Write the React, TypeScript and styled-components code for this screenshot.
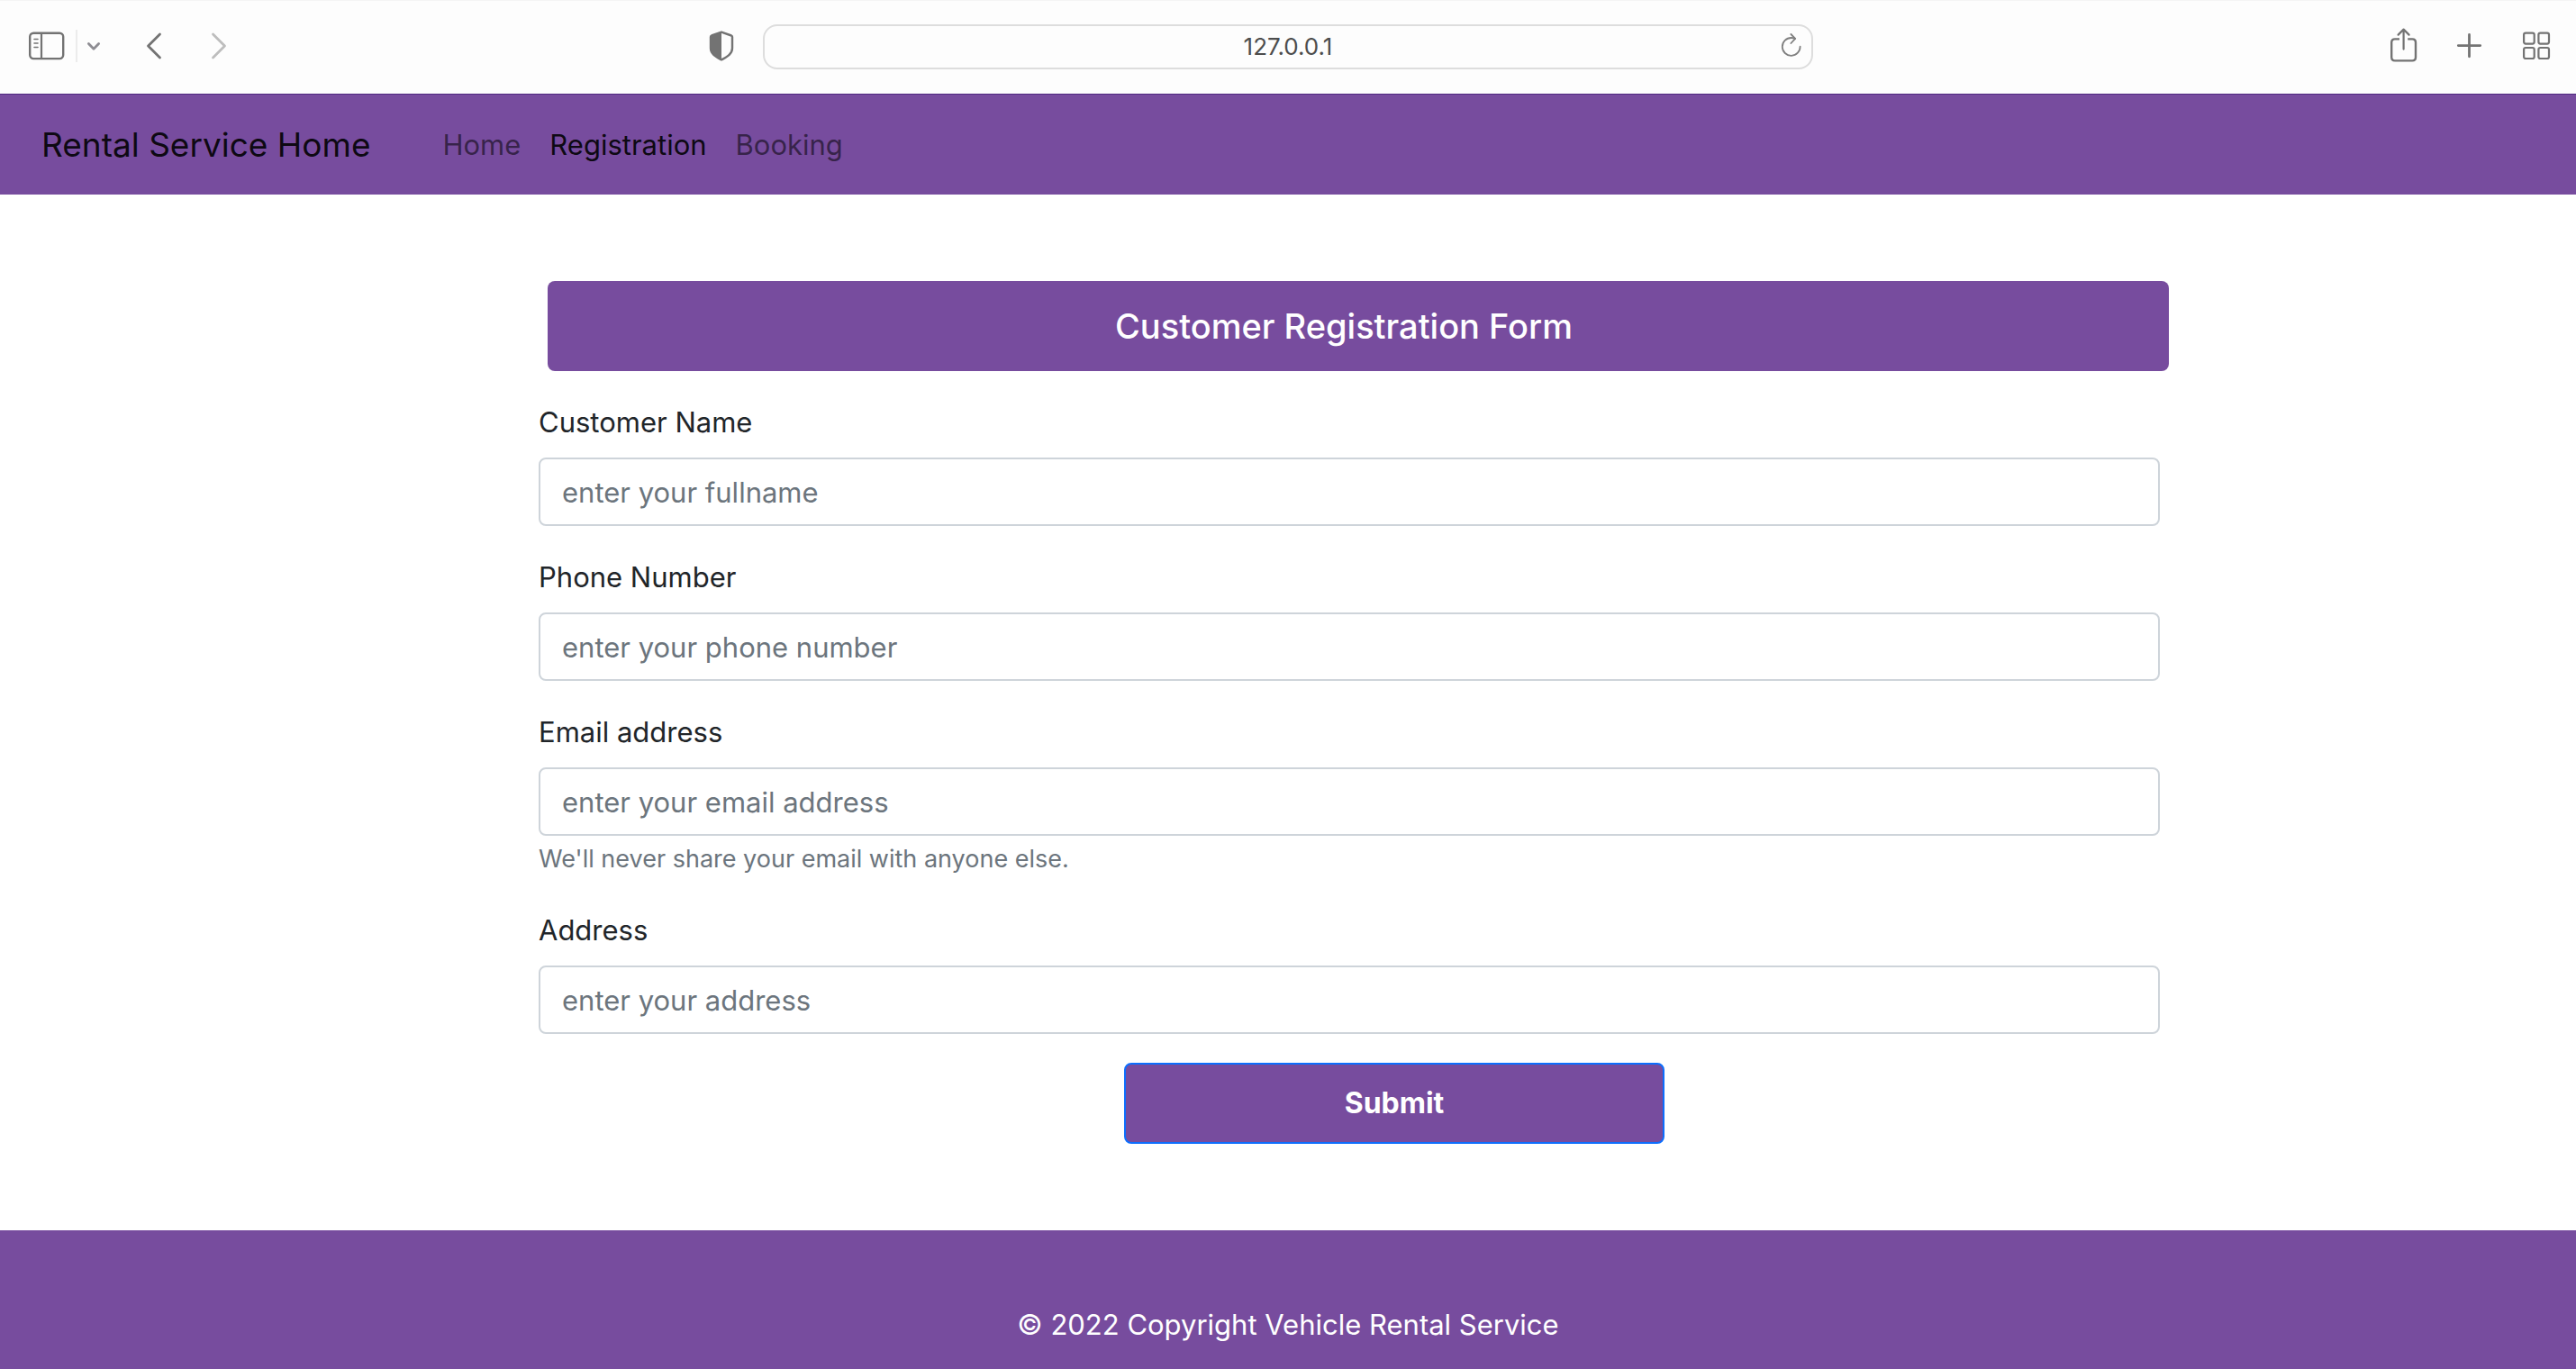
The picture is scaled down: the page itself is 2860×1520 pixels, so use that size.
import React from "react";
import styled, { createGlobalStyle } from "styled-components";

const purple = "#774c9e";

const GlobalStyle = createGlobalStyle`
  *, *::before, *::after { box-sizing: border-box; }
  body {
    margin: 0;
    background: #ffffff;
    color: #212529;
    font-family: Inter, "Liberation Sans", sans-serif;
    font-size: 31px;
    line-height: 50px;
  }
  button, input { font: inherit; }
`;

const Page = styled.div`
  display: flex;
  flex-direction: column;
  min-height: 100vh;
`;

const Toolbar = styled.div`
  display: grid;
  grid-template-columns: 1fr minmax(0, 1166px) 1fr;
  align-items: center;
  height: 105px;
  padding-bottom: 2px;
  border-top: 1px solid #f5f5f5;
  border-bottom: 1px solid #4f2780;
  background: #fdfdfd;
`;

const ToolGroup = styled.div<{ $end?: boolean }>`
  display: flex;
  align-items: center;
  justify-content: ${(p) => (p.$end ? "flex-end" : "flex-start")};
  gap: ${(p) => (p.$end ? "42px" : "0")};
  padding: ${(p) => (p.$end ? "0 28px 2px 0" : "0 32px 2px")};
`;

const ToolButton = styled.button<{ $space?: number; $push?: boolean }>`
  display: flex;
  flex: none;
  padding: 0;
  border: 0;
  background: none;
  color: #737373;
  margin-left: ${(p) => (p.$push ? "auto" : `${p.$space ?? 0}px`)};

  &:disabled { color: #bdbdbd; }
`;

const Divider = styled.span`
  width: 2px;
  height: 36px;
  margin: 0 0 0 12px;
  background: #ececec;
`;

const AddressBar = styled.div`
  position: relative;
  display: flex;
  height: 50px;
  border: 2px solid #dddddd;
  border-radius: 16px;
`;

const AddressInput = styled.input`
  width: 100%;
  padding: 0;
  border: 0;
  border-radius: 14px;
  outline: 0;
  background: transparent;
  color: #4d4d4d;
  font-size: 26px;
  line-height: 44px;
  text-align: center;
`;

const ReloadButton = styled.button`
  position: absolute;
  top: 7px;
  right: 10px;
  display: flex;
  padding: 0;
  border: 0;
  background: none;
  color: #808080;
`;

const Navbar = styled.nav`
  display: flex;
  align-items: center;
  gap: 80px;
  height: 111px;
  padding: 0 46px;
  background: ${purple};
`;

const Brand = styled.a`
  color: rgba(0, 0, 0, 0.9);
  font-size: 37px;
  text-decoration: none;
`;

const NavLinks = styled.div`
  display: flex;
  gap: 32px;
`;

const NavLink = styled.a<{ $active?: boolean }>`
  color: ${(p) => (p.$active ? "rgba(0, 0, 0, 0.9)" : "rgba(0, 0, 0, 0.55)")};
  text-decoration: none;
`;

const Main = styled.main`
  display: flex;
  justify-content: center;
  padding: 96px 0 96px 136px;
`;

const Form = styled.form`
  display: flex;
  flex-direction: column;
  gap: 32px;
  width: 100%;
  max-width: 1800px;
`;

const FormTitle = styled.h1`
  margin: 0 -10px 0 10px;
  padding: 25px 32px 25px 0;
  border-radius: 8px;
  background: ${purple};
  color: #ffffff;
  font-size: 38px;
  font-weight: 500;
  line-height: 50px;
  text-align: center;
`;

const Field = styled.div`
  display: flex;
  flex-direction: column;
`;

const Label = styled.label`
  margin-bottom: 14px;
`;

const TextInput = styled.input`
  width: 100%;
  height: 76px;
  padding: 0 24px;
  border: 2px solid #ced4da;
  border-radius: 8px;
  background: #ffffff;
  color: #212529;

  &::placeholder { color: #6c757d; opacity: 1; }
`;

const HelpText = styled.p`
  margin: 6px 0 2px;
  color: #6c757d;
  font-size: 27px;
  line-height: 40px;
`;

const Actions = styled.div`
  display: flex;
  justify-content: center;
  padding-left: 100px;
`;

const SubmitButton = styled.button`
  width: 600px;
  height: 90px;
  border: 2px solid #0d6efd;
  border-radius: 8px;
  background: ${purple};
  color: #ffffff;
  font-size: 32px;
  font-weight: 700;
`;

const Footer = styled.footer`
  flex: 1;
  padding: 80px 24px 24px;
  background: ${purple};
  color: #ffffff;
  text-align: center;
`;

const SidebarIcon = () => (
  <svg width="40" height="32" viewBox="0 0 40 32" fill="none" stroke="currentColor" strokeLinecap="round">
    <rect x="1.2" y="1.7" width="37" height="28.4" rx="4" strokeWidth="2.4" />
    <path d="M14 2V30" strokeWidth="2.2" />
    <path d="M6 8.5h4M6 13h4M6 17.5h4" strokeWidth="1.6" />
  </svg>
);

const ChevronDownIcon = () => (
  <svg width="16" height="12" viewBox="0 0 16 12" fill="none" stroke="#8e8d93" strokeWidth="2.8" strokeLinecap="round" strokeLinejoin="round">
    <path d="M2.4 3.6l5.6 5.6 5.6-5.6" />
  </svg>
);

const BackIcon = () => (
  <svg width="20" height="32" viewBox="0 0 20 32" fill="none" stroke="currentColor" strokeWidth="2.8" strokeLinecap="round" strokeLinejoin="round">
    <path d="M16.5 3L3.5 16l13 13" />
  </svg>
);

const ForwardIcon = () => (
  <svg width="20" height="32" viewBox="0 0 20 32" fill="none" stroke="currentColor" strokeWidth="2.8" strokeLinecap="round" strokeLinejoin="round">
    <path d="M3.5 3l13 13-13 13" />
  </svg>
);

const ShieldIcon = () => (
  <svg width="28" height="34" viewBox="0 0 28 34" fill="none">
    <path d="M14 1.6L25 5.5Q26 5.9 26 7V19.5C26 26 20 29 14 32.4C8 29 2 26 2 19.5V7Q2 5.9 3 5.5Z" stroke="currentColor" strokeWidth="2.4" strokeLinejoin="round" />
    <path d="M14 1.6L3 5.5Q2 5.9 2 7V19.5C2 26 8 29 14 32.4Z" fill="currentColor" />
  </svg>
);

const ReloadIcon = () => (
  <svg width="26" height="28" viewBox="0 0 26 28" fill="none" stroke="currentColor" strokeWidth="1.8" strokeLinecap="round" strokeLinejoin="round">
    <path d="M23.6 15.6A9.9 9.9 0 1 1 13.7 6Q16 6 18 6.8" />
    <path d="M13.4 2L18.2 6.8L13.4 12" />
  </svg>
);

const ShareIcon = () => (
  <svg width="32" height="40" viewBox="0 0 32 40" fill="none" stroke="currentColor" strokeWidth="2.4" strokeLinecap="round" strokeLinejoin="round">
    <path d="M12 12.4H7Q3.2 12.4 3.2 16.2V32.6Q3.2 36.4 7 36.4H26.2Q30 36.4 30 32.6V16.2Q30 12.4 26.2 12.4H21.2" strokeLinecap="butt" />
    <path d="M16.6 23.6V1.8M10.6 7.6l6-6 6 6" strokeWidth="2.2" />
  </svg>
);

const PlusIcon = () => (
  <svg width="32" height="32" viewBox="0 0 32 32" fill="none" stroke="currentColor" strokeWidth="2.8" strokeLinecap="round">
    <path d="M15.5 3.4v24.4M3.3 15.6h24.4" />
  </svg>
);

const TabsIcon = () => (
  <svg width="32" height="32" viewBox="0 0 32 32" fill="none" stroke="currentColor" strokeWidth="2.2">
    <rect x="2.1" y="1.6" width="11.6" height="12" rx="2" />
    <rect x="18.4" y="1.6" width="11.6" height="12" rx="2" />
    <rect x="2.1" y="18" width="11.6" height="12" rx="2" />
    <rect x="18.4" y="18" width="11.6" height="12" rx="2" />
  </svg>
);

const fields = [
  { id: "name", label: "Customer Name", type: "text", placeholder: "enter your fullname" },
  { id: "phone", label: "Phone Number", type: "tel", placeholder: "enter your phone number" },
  {
    id: "email",
    label: "Email address",
    type: "email",
    placeholder: "enter your email address",
    help: "We'll never share your email with anyone else.",
  },
  { id: "address", label: "Address", type: "text", placeholder: "enter your address" },
];

export default function App() {
  return (
    <Page>
      <GlobalStyle />
      <Toolbar>
        <ToolGroup>
          <ToolButton type="button" aria-label="Show sidebar"><SidebarIcon /></ToolButton>
          <Divider />
          <ToolButton type="button" aria-label="Tab groups" $space={10}><ChevronDownIcon /></ToolButton>
          <ToolButton type="button" aria-label="Back" $space={49}><BackIcon /></ToolButton>
          <ToolButton type="button" aria-label="Forward" $space={52} disabled><ForwardIcon /></ToolButton>
          <ToolButton type="button" aria-label="Privacy report" $push><ShieldIcon /></ToolButton>
        </ToolGroup>
        <AddressBar>
          <AddressInput type="text" aria-label="Address bar" defaultValue="127.0.0.1" />
          <ReloadButton type="button" aria-label="Reload"><ReloadIcon /></ReloadButton>
        </AddressBar>
        <ToolGroup $end>
          <ToolButton type="button" aria-label="Share"><ShareIcon /></ToolButton>
          <ToolButton type="button" aria-label="New tab"><PlusIcon /></ToolButton>
          <ToolButton type="button" aria-label="Tab overview"><TabsIcon /></ToolButton>
        </ToolGroup>
      </Toolbar>

      <Navbar>
        <Brand href="#">Rental Service Home</Brand>
        <NavLinks>
          <NavLink href="#home">Home</NavLink>
          <NavLink href="#registration" $active aria-current="page">Registration</NavLink>
          <NavLink href="#booking">Booking</NavLink>
        </NavLinks>
      </Navbar>

      <Main>
        <Form onSubmit={(event) => event.preventDefault()}>
          <FormTitle>Customer Registration Form</FormTitle>
          {fields.map((field) => (
            <Field key={field.id}>
              <Label htmlFor={field.id}>{field.label}</Label>
              <TextInput
                id={field.id}
                type={field.type}
                placeholder={field.placeholder}
                aria-describedby={field.help ? `${field.id}-help` : undefined}
              />
              {field.help && <HelpText id={`${field.id}-help`}>{field.help}</HelpText>}
            </Field>
          ))}
          <Actions>
            <SubmitButton type="submit">Submit</SubmitButton>
          </Actions>
        </Form>
      </Main>

      <Footer>© 2022 Copyright Vehicle Rental Service</Footer>
    </Page>
  );
}
